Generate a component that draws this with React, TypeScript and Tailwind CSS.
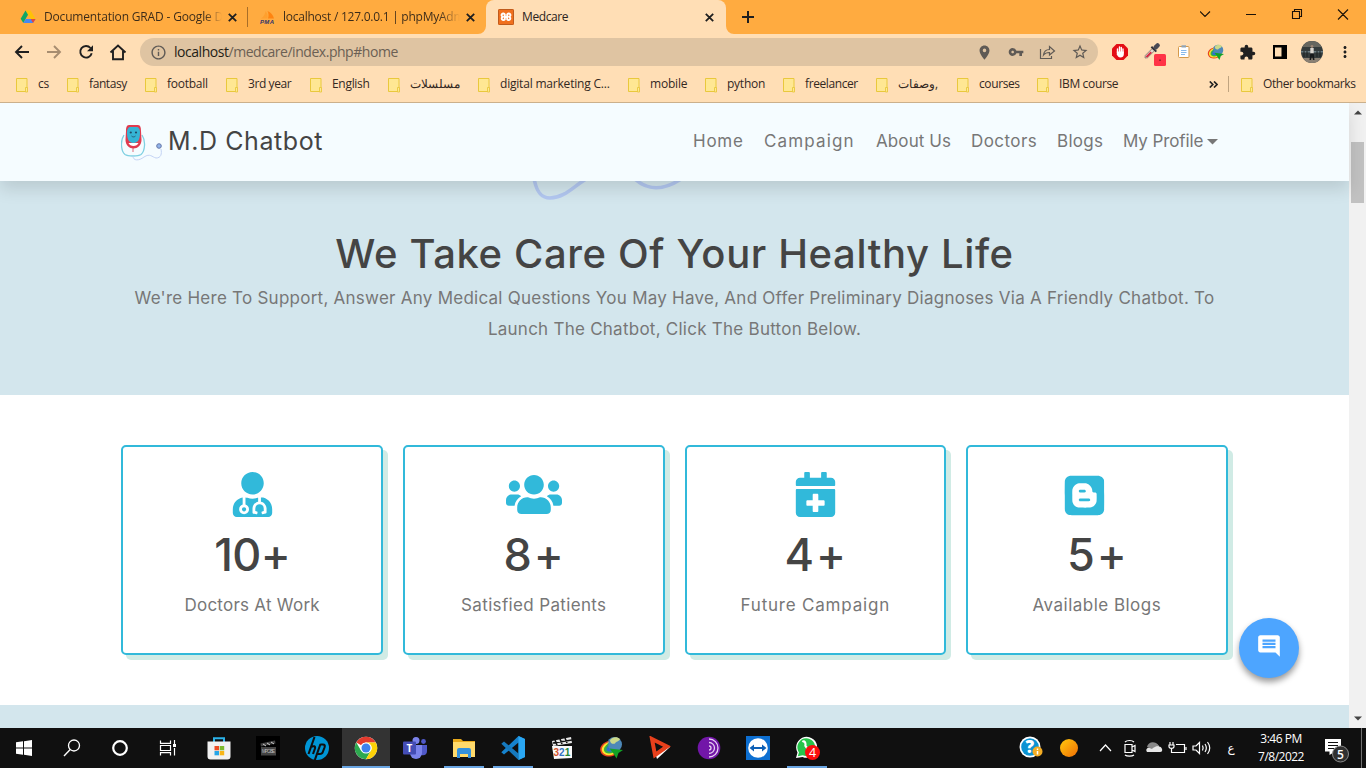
import type { ReactNode } from 'react';
import { FaUserMd, FaUsers, FaCalendarPlus, FaBlogger } from 'react-icons/fa';
import { MdOutlineInfo, MdLocationOn, MdVpnKey, MdStarBorder, MdExtension, MdMoreVert, MdComment } from 'react-icons/md';

const UI = "font-['Open_Sans','Noto_Sans',sans-serif]";
const PAGE = "font-['Inter',sans-serif]";

function Cross() {
  return (
    <svg width="9" height="9" viewBox="0 0 9 9" className="shrink-0" stroke="#1f1f1f" strokeWidth="1.8">
      <path d="M.8.8l7.4 7.4M8.2.8L.8 8.2" />
    </svg>
  );
}

function DriveIcon() {
  return (
    <svg width="16" height="16" viewBox="0 0 16 16">
      <path d="M5.5 1.500h5L15.500 10h-4.700z" fill="#ffc107" />
      <path d="M5.500 1.500L8 5.800 3.300 14 .7 9.800z" fill="#10a765" />
      <path d="M3.300 14l2.400-4.100h9.800L13 14z" fill="#4688f4" />
      <path d="M13 14l-2.300-4.100h4.800z" fill="#e8453c" />
    </svg>
  );
}

function PmaIcon() {
  return (
    <svg width="18" height="16" viewBox="0 0 18 16">
      <path d="M2 9.500C5 8 6 5 6.500 2c2 2 2.500 5 2 7.500z" fill="#ffa02e" />
      <path d="M9 9.500c1-3 .5-5.500-.5-7.500 3.500 1.500 5.500 4 6.500 7.500z" fill="#ff8410" />
      <text x="1" y="15" fontSize="6" fontWeight="700" fontStyle="italic" fill="#33366e" textLength="14" fontFamily="Liberation Sans">PMA</text>
    </svg>
  );
}

function XamppIcon() {
  return (
    <svg width="16" height="16" viewBox="0 0 16 16">
      <rect width="16" height="16" rx="1.500" fill="#f0701e" />
      <rect x=".5" y=".5" width="15" height="15" rx="1" fill="none" stroke="#bf5b1d" />
      <path d="M6.800 8H9.200M6.800 8V5.400a1.700 1.700 0 1 0-1.900 2.400 1.700 1.700 0 1 0 1.900 2.600zM9.200 8V5.400a1.700 1.700 0 1 1 1.900 2.400 1.700 1.700 0 1 1-1.900 2.600z" fill="none" stroke="#fff" strokeWidth="1.900" strokeLinejoin="round" />
    </svg>
  );
}

function TabStrip() {
  return (
    <div className="flex h-[34px] bg-[#ffab40]">
      <div className="flex w-[247px] items-center pl-5">
        <DriveIcon />
        <span className="ml-2 w-[178px] overflow-hidden whitespace-nowrap bg-gradient-to-r from-[#3a2a18] from-90% to-[#ffab40] bg-clip-text text-[12px] tracking-[-0.170px] text-transparent">Documentation GRAD - Google Drive</span>
        <span className="ml-[6px] flex"><Cross /></span>
      </div>
      <div className="my-auto h-[20px] w-px bg-[#a86e28]" />
      <div className="flex w-[238px] items-center pl-[11px]">
        <PmaIcon />
        <span className="ml-[6px] w-[177px] overflow-hidden whitespace-nowrap bg-gradient-to-r from-[#3a2a18] from-88% to-[#ffab40] bg-clip-text text-[12px] tracking-[-0.250px] text-transparent">localhost / 127.0.0.1 | phpMyAdmin</span>
        <span className="ml-[6px] flex"><Cross /></span>
      </div>
      <div className="relative flex w-[240px] items-center rounded-t-[8px] bg-[#ffdeb5] pl-3">
        <svg width="256" height="8" viewBox="0 0 256 8" className="absolute -left-2 bottom-0" fill="#ffdeb5"><path d="M0 8a8 8 0 0 0 8-8v8zM256 8a8 8 0 0 1-8-8v8z" /></svg>
        <XamppIcon />
        <span className="ml-2 w-[183px] text-[12px] tracking-[-0.400px] text-[#2b2420]">Medcare</span>
        <Cross />
      </div>
      <svg width="12" height="12" viewBox="0 0 12 12" className="my-auto ml-4" stroke="#1f1f1f" strokeWidth="2"><path d="M6 0v12M0 6h12" /></svg>
      <div className="flex-1" />
      <svg width="160" height="28" viewBox="0 0 160 28" fill="none" stroke="#1b1208" strokeWidth="1.100">
        <path d="M0 11.500l5 5 5-5M46 14.500h10M92.500 11.500h7v7h-7zM94.500 11.500v-2h7v7h-2M138 9.500l10 10M148 9.500l-10 10" />
      </svg>
      <div className="w-[6px]" />
    </div>
  );
}

function IdmIcon({ size }: { size: number }) {
  return (
    <svg width={size} height={size} viewBox="0 0 24 24" fill="none">
      <circle cx="15.500" cy="8.500" r="7.500" fill="#4d88b8" />
      <path d="M11 4c2-3 7-4 10-1-1 3-4 2-5 4.500-2 1-5 0-5-3.500z" fill="#cbd98a" />
      <path d="M10 5C4 6 0 11 1.500 15.500 3 20.500 10 22 16 19l-2-3c-4 1.500-7 .5-7.500-2C6 11 8 7 10 5z" fill="#e8431f" />
      <path d="M10 6C5 7.500 2 11.500 3 15c1 4 7 5.500 12 3l-1.500-2.500c-4 1-6 0-6.500-2C6.500 11 8 8 10 6z" fill="#fbe62e" />
      <path d="M10 7.500C7 9 4.500 11.500 5 14.500c1 3 5 4 9.500 2l-1-2c-3 .5-5 0-5-2 0-1.500.5-3 1.500-5z" fill="#35b04a" />
      <path d="M9.500 9.500C8 11 7 12.500 7.500 14c.5 1.500 3 2 6 1v-2c-2 0-3.500 0-4-1z" fill="#2e6fd0" />
      <path d="M10.500 12.500L24 14l-4.500 3L17.500 22.500l-3-5z" fill="#12a326" />
    </svg>
  );
}

function Toolbar() {
  return (
    <div className="flex h-9 items-center bg-[#ffdeb5] text-[#202020]">
      <svg width="128" height="20" viewBox="0 0 128 20" fill="none" strokeWidth="1.900" className="mr-3 shrink-0">
        <path d="M29 10H16.500M22 4l-6 6 6 6" stroke="#1f1f1f" />
        <path d="M47 10h12.500M54 4l6 6-6 6" stroke="#a78d70" />
        <path d="M90.500 6A5.800 5.800 0 1 0 91.700 11.200" stroke="#1f1f1f" /><path d="M93 3.200v6h-6z" fill="#1f1f1f" />
        <path d="M110.500 10.500l7.500-7 7.500 7M113 9v8.200h10V9" stroke="#1f1f1f" />
      </svg>
      <div className="flex h-7 w-[958px] items-center rounded-full bg-[#dfc4a2] pl-[10px] text-[#5f5a55]">
        <MdOutlineInfo size={17} />
        <span className="mt-[-2px] ml-[7px] text-[14px] tracking-[-0.460px] text-[#6b6054]"><span className="text-[#241d16]">localhost</span>/medcare/index.php#home</span>
        <div className="flex-1" />
        <MdLocationOn size={17} className="mr-[15px]" />
        <MdVpnKey size={16} className="mr-[15px]" />
        <svg width="17" height="16" viewBox="0 0 17 16" fill="none" stroke="#5f5a55" strokeWidth="1.200" className="mr-[15px]"><path d="M1.500 5v9.500h11V12M4.500 11c.5-4 3-5.500 6-5.500V2.500L15.500 7l-5 4V8.500c-2.500 0-4.500.5-6 2.500z" /></svg>
        <MdStarBorder size={18} className="mr-[9px]" />
      </div>
      <div className="ml-[13px] flex items-center">
        <svg width="18" height="18" viewBox="0 0 18 18" className="mr-[15px]">
          <path d="M5.500 1h7L17 5.500v7L12.500 17h-7L1 12.500v-7z" fill="#e40d14" />
          <path d="M6.500 9.500V6M8.500 9V4M10.300 9V4.500M12 10V6" stroke="#fff" strokeWidth="1.400" strokeLinecap="round" />
          <path d="M5.800 8.500h7v3c0 2-1.500 3-3.300 3-2.200 0-3-1.500-3.700-3z" fill="#fff" />
        </svg>
        <svg width="22" height="24" viewBox="0 0 22 24" className="mr-3 mt-[4px]">
          <g transform="translate(1 16) rotate(-45)">
            <path d="M0 0l2-1.600h10v3.200H2z" fill="#e4d6cc" stroke="#7a6660" strokeWidth=".7" />
            <path d="M1.500-.6h7v1.800H2z" fill="#d92740" />
            <path d="M11.500-3.500h2v7h-2z" fill="#33333a" />
            <rect x="13" y="-2.200" width="7" height="4.400" rx="2" fill="#4a4a54" />
          </g>
          <rect x="10" y="12" width="12" height="12" rx="1.500" fill="#ff3347" /><rect x="15.500" y="17.500" width="1" height="1.500" fill="#4a1015" />
        </svg>
        <svg width="14" height="16" viewBox="0 0 14 16" className="mr-[16px] ml-[-1px]">
          <rect x="1.500" y="2.500" width="10.500" height="11" rx="1" fill="#fff" stroke="#d69a4a" /><rect x="4.500" y="1.300" width="4.500" height="2.200" fill="#8fa3b5" /><path d="M4 6.500h5.500M4 8.500h5.500M4 10.500h4" stroke="#87b9ea" />
        </svg>
        <IdmIcon size={17} />
        <MdExtension size={17} className="ml-[15px]" />
        <svg width="14" height="14" viewBox="0 0 14 14" className="ml-[17px]"><path d="M0 0h14v14H0z" /><path d="M2 2.500h6.500v9H2z" fill="#ffdeb5" /></svg>
        <svg width="22" height="22" viewBox="0 0 22 22" className="ml-[14px]">
          <clipPath id="av"><circle cx="11" cy="11" r="11" /></clipPath>
          <g clipPath="url(#av)"><path d="M0 0h22v22H0z" fill="#343b3c" /><path d="M0 0h22v6H0z" fill="#66665f" /><path d="M0 10h22v1.500H0z" fill="#6b7c82" /><path d="M0 17h22v5H0z" fill="#8a8073" /><path d="M3 10v6M6 10v6M16 10v6M19 10v6" stroke="#1b2322" /><circle cx="11" cy="5.500" r="1.400" fill="#9d8675" /><path d="M9.300 7h3.400v5.500H9.300z" fill="#d9d5cf" /><path d="M9.300 12.500h3.400l.8 6.500h-1.500l-1-4-1 4H8.500z" fill="#15181a" /></g>
        </svg>
        <MdMoreVert size={18} className="ml-[13px]" />
      </div>
    </div>
  );
}

function Folder() {
  return (
    <svg width="12" height="15" viewBox="0 0 12 15" className="mt-[2px] shrink-0">
      <path d="M.5.5h10.500v13H.5z" fill="#ffe793" stroke="#e9c83d" /><path d="M9.500 9.500h2V14h-2z" fill="#ffe793" stroke="#e9c83d" strokeWidth=".9" />
    </svg>
  );
}

const bookmarks = [
  ['cs', 'w-[51px]', 'tracking-[-0.300px]'],
  ['fantasy', 'w-[78px]', 'tracking-[-0.400px]'],
  ['football', 'w-[81px]', 'tracking-[-0.250px]'],
  ['3rd year', 'w-[84px]', 'tracking-[-0.400px]'],
  ['English', 'w-[78px]', 'tracking-[-0.300px]'],
  ['مسلسلات', 'w-[90px]', ''],
  ['digital marketing C...', 'w-[150px]', 'tracking-[-0.200px]'],
  ['mobile', 'w-[77px]', 'tracking-[-0.200px]'],
  ['python', 'w-[78px]', 'tracking-[-0.250px]'],
  ['freelancer', 'w-[93px]', 'tracking-[-0.400px]'],
  ['وصفات,', 'w-[81px]', ''],
  ['courses', 'w-[80px]', 'tracking-[-0.400px]'],
  ['IBM course', 'w-[90px]', 'tracking-[-0.350px]'],
];

function BookmarkBar() {
  return (
    <div className="flex h-[33px] items-center border-b border-[#cbb08c] bg-[#ffdeb5] pb-[4px] pl-4 text-[12px] text-[#33281f]">
      {bookmarks.map(([label, width, track]) => (
        <div key={label} className={`flex shrink-0 items-center whitespace-nowrap ${width}`}>
          <Folder /><span className={`ml-[10px] ${track}`}>{label}</span>
        </div>
      ))}
      <svg width="9" height="7" viewBox="0 0 9 7" className="ml-[82px]" fill="none" stroke="#222" strokeWidth="1.700"><path d="M.8.5l3 3-3 3M5 .5l3 3-3 3" /></svg>
      <div className="ml-[10px] h-4 w-px bg-[#c0a480]" />
      <div className="ml-3 flex items-center whitespace-nowrap"><Folder /><span className="ml-[10px] tracking-[-0.400px]">Other bookmarks</span></div>
    </div>
  );
}

function BotLogo() {
  return (
    <svg width="42" height="38" viewBox="0 0 42 38" fill="none" className="mt-1">
      <path d="M3 10C-1 16 0 26 4 29.500c3 2 13 2 16 0 4-3.500 5-13.500 1-19.500" stroke="#7fd0e2" strokeWidth="1.300" />
      <path d="M12 31c0 5 6 5 11 1 6-4 8 0 12 1 5 0 6-4 5-9" stroke="#c3d3f5" strokeWidth="1" />
      <path d="M12 22v5" stroke="#e06a78" />
      <path d="M8 0h9c2.500 0 3 3 3 6l.5 9c0 5-4 8.500-8 8.500S4.500 20 4.500 15L5 6c0-3 .5-6 3-6z" fill="#e03b4f" />
      <path d="M7.500 18c1.500 4 8.500 4 10 0z" fill="#fff" />
      <path d="M9.500 2h6c2.500 0 3.500 2.500 3.500 5.500 0 5-1 10.500-6.500 10.500S6 12.500 6 7.500C6 4.500 7 2 9.500 2z" fill="#35b4d5" />
      <circle cx="9.800" cy="7.500" r="1.100" fill="#214a65" /><circle cx="15" cy="7.500" r="1.100" fill="#214a65" /><path d="M10.500 11c1.300 1.200 2.700 1.200 4 0" stroke="#214a65" strokeWidth=".8" />
      <circle cx="38" cy="21" r="2.300" fill="#91b4ea" stroke="#6476a8" />
    </svg>
  );
}

const nav = [
  ['Home', 'w-[71px] tracking-[0.750px]'],
  ['Campaign', 'w-[112px] tracking-[1.150px]'],
  ['About Us', 'w-[95px] tracking-[0.100px]'],
  ['Doctors', 'w-[86px] tracking-[0.430px]'],
  ['Blogs', 'w-[66px] tracking-[0.300px]'],
  ['My Profile', 'w-[84px] tracking-[-0.100px]'],
];

const stats: { icon: ReactNode; value: string; valueTrack: string; label: string; track: string }[] = [
  { icon: <FaUserMd size={45} className="mt-[-1px]" />, value: '10+', valueTrack: 'tracking-[-0.700px]', label: 'Doctors At Work', track: 'tracking-[0.250px]' },
  { icon: <FaUsers size={56} className="mt-[-1px] h-[45px]" />, value: '8+', valueTrack: 'tracking-[2px] pl-[2px]', label: 'Satisfied Patients', track: 'tracking-[0.350px]' },
  { icon: <FaCalendarPlus size={45} className="mt-[-1px]" />, value: '4+', valueTrack: 'tracking-[2px] pl-[2px]', label: 'Future Campaign', track: 'tracking-[0.800px]' },
  { icon: <FaBlogger size={45} className="mt-px mr-[25px]" />, value: '5+', valueTrack: 'tracking-[2px] pl-[2px]', label: 'Available Blogs', track: 'tracking-[0.480px]' },
];

function Page() {
  return (
    <div className="flex h-[625px] overflow-hidden">
      <div className={`relative flex w-[1349px] flex-col bg-white ${PAGE}`}>
        <header className="z-10 flex h-[78px] shrink-0 items-center bg-[#f5fcff] pl-[121px] shadow-[0_8px_16px_rgba(0,0,0,0.12)]">
          <BotLogo />
          <span className="ml-[5px] w-[525px] whitespace-nowrap text-[25px] tracking-[0.580px] text-[#444]">M.D Chatbot</span>
          <nav className="flex items-center whitespace-nowrap text-[17px] text-[#777]">
            {nav.map(([label, look]) => <a key={label} className={look}>{label}</a>)}
            <svg width="11" height="6" viewBox="0 0 11 6" fill="#777"><path d="M0 0h11L5.500 5.500z" /></svg>
          </nav>
        </header>
        <section className="flex h-[214px] shrink-0 flex-col items-center bg-[#d3e6ed] text-center">
          <svg width="160" height="22" viewBox="0 0 160 22" fill="none" stroke="#b2c7f0" strokeWidth="3.600" className="mr-[129px] shrink-0">
            <path d="M4-3C6 9 10 17 20 17C34 17 43 6 56-2M105-2C117 9 133 10 151-2" />
          </svg>
          <h1 className="mt-[25px] whitespace-nowrap text-[40px] leading-[52px] font-medium tracking-[0.620px] text-[#444]">We Take Care Of Your Healthy Life</h1>
          <p className="mt-[3px] whitespace-nowrap text-[17px] leading-[31px] tracking-[0.250px] text-[#777]">We're Here To Support, Answer Any Medical Questions You May Have, And Offer Preliminary Diagnoses Via A Friendly Chatbot. To<br />Launch The Chatbot, Click The Button Below.</p>
        </section>
        <section className="grid h-[310px] shrink-0 grid-cols-4 gap-5 px-[9%] py-[50px]">
          {stats.map((s) => (
            <div key={s.label} className="flex flex-col items-center rounded-[5px] border-2 border-[#31b9da] bg-white pt-[25px] shadow-[5px_5px_0_#d0ebe5]">
              <div className="flex h-[45px] items-center text-[#31b9da]">{s.icon}</div>
              <div className={`mt-[10px] text-[45px] leading-[56px] font-medium text-[#444] ${s.valueTrack}`}>{s.value}</div>
              <div className={`mt-[7px] text-[17px] leading-[30px] text-[#777] ${s.track}`}>{s.label}</div>
            </div>
          ))}
        </section>
        <div className="flex-1 bg-[#d3e6ed]" />
        <button className="absolute top-[515px] left-[1239px] flex h-[60px] w-[60px] items-center justify-center rounded-full bg-[#4da5ff] pb-[4px] text-white shadow-[0_4px_6px_rgba(0,0,0,0.4)]"><MdComment size={26} /></button>
      </div>
      <div className="flex w-[17px] flex-col items-center bg-[#f1f1f1] py-[7px]">
        <svg width="8" height="5" viewBox="0 0 8 5"><path d="M4 .5L8 4.500H0z" fill="#444" /></svg>
        <div className="mt-[27px] h-[61px] w-[13px] bg-[#c1c1c1]" />
        <div className="flex-1" />
        <svg width="8" height="5" viewBox="0 0 8 5"><path d="M4 4.500L8 .5H0z" fill="#444" /></svg>
      </div>
    </div>
  );
}

function Ic({ children }: { children: ReactNode }) {
  return <svg width="24" height="24" viewBox="0 0 24 24" fill="none">{children}</svg>;
}

const systemIcons: ReactNode[] = [
  <Ic><path d="M4 6.300l7-1v6.200H4zM12 5.200L20 4v7.500h-8zM4 12.500h7v6.200l-7-1zM12 12.500h8V20l-8-1.200z" fill="#fff" /></Ic>,
  <Ic><circle cx="14" cy="9.500" r="5.500" stroke="#fff" strokeWidth="1.300" /><path d="M10.200 13.500L4 20" stroke="#fff" strokeWidth="1.400" /></Ic>,
  <Ic><circle cx="12" cy="12" r="6.800" stroke="#fff" strokeWidth="2.200" /></Ic>,
  <Ic><path d="M4.500 4.500v2.800h10V4.500M4.500 19.500v-2.800h10v2.800M4.500 9.500h10v5h-10zM18.500 4v4M18.500 12v7.500" stroke="#fff" strokeWidth="1.200" /><path d="M17 8h3v3h-3z" fill="#fff" /></Ic>,
];

const apps: { icon: ReactNode; open?: boolean; active?: boolean }[] = [
  { icon: <Ic><path d="M7 6V2.200h10V6" stroke="#2bb3ea" strokeWidth="2" /><path d="M.5 5.500h23v15a3 3 0 0 1-3 3h-17a3 3 0 0 1-3-3z" fill="#f1f1f1" /><path d="M7.500 10H12v4.300H7.500z" fill="#ec4b24" /><path d="M12.700 10h4.500v4.300h-4.500z" fill="#7cba2c" /><path d="M7.500 15H12v4.300H7.500z" fill="#25a5e8" /><path d="M12.700 15h4.500v4.300h-4.500z" fill="#f8b516" /></Ic> },
  { icon: <Ic><path d="M0 0h24v24H0z" fill="#000" /><path d="M4.500 7.500l14.500-3 .5 3-14.500 3zM5 11h15v8.500H5z" fill="#444" /><path d="M7 8l3 2M11 7l3 2M15 6l3 2" stroke="#ccc" /><text x="6" y="17" fontSize="4.500" textLength="13" fill="#bbb" fontFamily="Liberation Sans">MPC-BE</text></Ic> },
  { icon: <Ic><circle cx="12" cy="12" r="12" fill="#0096d6" /><path d="M9.500 1L3.500 18M5.800 11c3-1.500 5-1 4 2l-1.800 5M15.500 8L9.800 24M15.300 8.500h2.500c2 0 2.300 1 1.700 3l-1.700 4.500c-.5 1.500-1.500 2-3 2h-2.300" stroke="#101010" strokeWidth="2.100" /></Ic> },
  { icon: <Ic><circle cx="12" cy="12" r="11.200" fill="#fff" /><path d="M12 12L2.300 6.400A11.200 11.200 0 0 1 21.700 6.400H12a5.600 5.600 0 0 0-4.850 2.800z" fill="#e33b2e" /><path d="M2.300 6.400A11.200 11.200 0 0 0 12 23.200l4.850-8.400L12 12 7.150 14.800z" fill="#2da94f" /><path d="M21.700 6.400A11.200 11.200 0 0 1 12 23.200l4.850-8.400A5.600 5.600 0 0 0 12 6.400z" fill="#fdd106" /><circle cx="12" cy="12" r="5.600" fill="#fff" /><circle cx="12" cy="12" r="4.500" fill="#3f82ee" /></Ic>, active: true, open: true },
  { icon: <Ic><circle cx="13" cy="4.500" r="3.500" fill="#7b83eb" /><circle cx="20.500" cy="5.500" r="2.400" fill="#5059c9" /><path d="M17 9h7v6c0 4-3 5-6 4z" fill="#5059c9" /><path d="M7 9h12v8a6 6 0 0 1-12 0z" fill="#7b83eb" /><rect y="5.500" width="13" height="13" rx="1" fill="#444db5" /><text x="3.500" y="15.500" fontSize="10" fontWeight="700" fill="#fff" fontFamily="Open Sans">T</text></Ic> },
  { icon: <Ic><path d="M1 3h8l2 2h12v15H1z" fill="#e8a91b" /><path d="M1 6h22v15H1z" fill="#ffda6b" /><path d="M5 22v-8a2 2 0 0 1 2-2h10a2 2 0 0 1 2 2v8h-3v-4H8v4z" fill="#3391dd" /></Ic>, open: true },
  { icon: <Ic><path d="M17.500 0L24 3v18l-6.500 3V6.500L3 18.500.3 16.300z" fill="#1683ce" /><path d="M17.500 24V17.500L3 5.500.3 7.700z" fill="#1679be" /><path d="M17.500 0L24 3v18l-6.500 3z" fill="#2aa7f3" /></Ic>, open: true },
  { icon: <Ic><path d="M2 5l19-4 1 6-19 3z" fill="#e8e8e8" /><path d="M5 4l2 5M10 3l2 5M15 2l2 5M3 7l19-3" stroke="#111" strokeWidth="1.600" /><path d="M2 10h20v12l-18 1z" fill="#fafafa" /><text x="3.500" y="20" fontSize="10" fontWeight="700" fontFamily="Liberation Sans"><tspan fill="#d3542b">3</tspan><tspan fill="#3273c5">2</tspan><tspan fill="#218735">1</tspan></text></Ic> },
  { icon: <IdmIcon size={24} /> },
  { icon: <Ic><path d="M2 1l20 10L9 23z" fill="#fff" /><path d="M4 3l15 7.500L7 19z" stroke="#e8401c" strokeWidth="4" fill="#101010" /></Ic> },
  { icon: <Ic><circle cx="12" cy="12" r="11.300" fill="#7216a8" /><path d="M12 3a9 9 0 0 1 0 18M12 6.500a5.500 5.500 0 0 1 0 11M12 10a2 2 0 0 1 0 4" stroke="#e6cff2" strokeWidth="1.300" /></Ic> },
  { icon: <Ic><path d="M0 0h24v24H0z" fill="#0d6fd1" /><circle cx="12" cy="12" r="9.800" fill="#fff" /><path d="M3.500 12L8 8.500V11h8V8.500l4.500 3.500-4.500 3.500V13H8v2.500z" fill="#0d5fb5" /></Ic> },
  { icon: <svg width="30" height="24" viewBox="-3 0 30 24" fill="none"><path d="M1 22L2.500 16.500A10.500 10.500 0 1 1 7.500 21z" fill="#fff" /><path d="M2.800 20.300l1.200-4A8.900 8.900 0 1 1 7.700 19.300z" fill="#26c44b" /><path d="M7.500 6c2-2 3 1 3 2.500-1 1.500 2 4.500 4 4.500" stroke="#fff" strokeWidth="2.200" /><circle cx="17.500" cy="16.500" r="7.500" fill="#fb0d0d" /><text x="14" y="21" fontSize="12.500" fill="#fff" fontFamily="Open Sans">4</text></svg>, open: true },
];

function Taskbar() {
  return (
    <div className="flex h-10 bg-[#101010] text-white">
      {systemIcons.map((icon, i) => <div key={i} className="flex w-12 items-center justify-center">{icon}</div>)}
      <div className="w-[2px]" />
      {apps.map((a, i) => (
        <div key={i} className={`flex flex-col items-center pt-2 ${a.active ? 'ml-px w-12 bg-[#333]' : 'w-[49px]'}`}>
          {a.icon}
          {a.open && <div className={`mt-[6px] h-[2px] bg-[#69a5e2] ${a.active ? 'w-full' : 'w-10'}`} />}
        </div>
      ))}
      <div className="flex-1" />
      <div className="flex items-center">
        <svg width="24" height="24" viewBox="0 0 24 24"><circle cx="11" cy="11" r="10.500" fill="#fff" /><circle cx="11" cy="11" r="8.800" fill="#0b93d3" /><text x="6.500" y="17" fontSize="17" fontWeight="800" fill="#fff" fontFamily="Open Sans">?</text><circle cx="18.500" cy="15.500" r="5" fill="#f3ac24" /><path d="M18.500 12.500v1.500M18.500 15v3.500" stroke="#fff" strokeWidth="1.500" /></svg>
        <div className="ml-[17px] h-[18px] w-[18px] rounded-full bg-gradient-to-br from-[#ffc90e] to-[#ee6c05]" />
        <svg width="114" height="20" viewBox="0 0 114 20" className="ml-[21px]" fill="none" stroke="#fff" strokeWidth="1.200">
          <path d="M1 13l5.500-6 5.500 6" />
          <path d="M26 6.500h7v8h-7zM33 9l3-1.500v6l-3-1.500M26 4c2-2 7-2 9 0M26 17c2 1.500 7 1.500 9 0" />
          <path d="M48 14c-2-3 1-5 3-4 1-5 7-6 9-1.500 3 0 5 5.500 1 5.500z" fill="#e6e6e6" stroke="none" /><path d="M48 9c1-5 8-7 12-1-4 0-6 2-7 3z" fill="#888" stroke="none" />
          <path d="M77 6.500h8.500v8H76M87 9v3M71 4v3M74 4v3M70 7h5v1.500c0 2.500-5 2.500-5 0zM72.500 10.500v4h3.500" />
          <path d="M94 8h3l3.500-3.500v11L97 12h-3zM103.500 7.500c1 2 1 3 0 5M106 6c2 3 2 5 0 8M108.500 4c3 4 3 8 0 12" />
        </svg>
        <span className="ml-[8px] w-5 text-center font-['DejaVu_Sans',sans-serif] text-[12px]">ع</span>
        <div className="ml-[5px] w-[70px] text-center text-[12px] leading-[18px] tracking-[-0.500px]"><div>3:46 PM</div><div>7/8/2022</div></div>
        <svg width="28" height="26" viewBox="0 0 28 26" className="ml-[7px] mt-1"><path d="M2 2h16v12.500h-6L6.500 18v-3.500H2z" fill="#fff" /><path d="M5 5.500h10M5 8.500h10M5 11.500h6" stroke="#101010" strokeWidth="1.200" /><circle cx="17.500" cy="17" r="8" fill="#303030" stroke="#8a8a8a" /><text x="14" y="21.500" fontSize="12" fontWeight="600" fill="#fff" fontFamily="Open Sans">5</text></svg>
        <div className="mr-1 ml-[10px] h-10 w-px bg-[#707070]" />
      </div>
    </div>
  );
}

export default function App() {
  return (
    <div className={`h-[768px] w-[1366px] overflow-hidden bg-white ${UI}`}>
      <TabStrip />
      <Toolbar />
      <BookmarkBar />
      <Page />
      <Taskbar />
    </div>
  );
}
